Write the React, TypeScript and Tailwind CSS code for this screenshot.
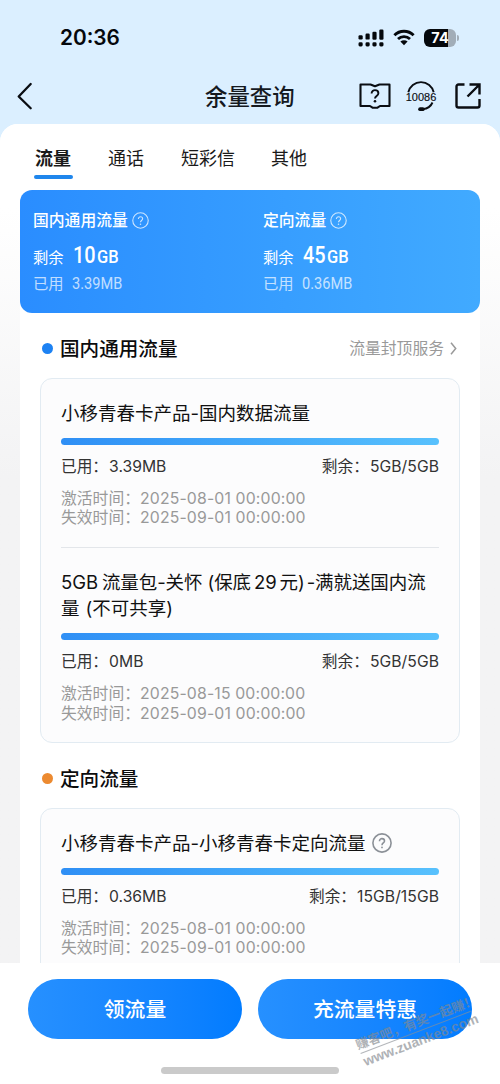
import React from 'react';

const SignalIcon = () => (
  <svg width="26" height="18" viewBox="0 0 26 18" fill="#05080c">
    <rect x="0.5" y="6.2" width="4.2" height="4.3" rx="1.2" />
    <rect x="7.5" y="4.6" width="4.2" height="6" rx="1.2" />
    <rect x="14.4" y="2.7" width="4.2" height="8" rx="1.2" />
    <rect x="21.3" y="0.5" width="4.2" height="10.2" rx="1.2" />
    <rect x="0.5" y="13.3" width="4.2" height="4.2" rx="1.4" />
    <rect x="7.5" y="13.3" width="4.2" height="4.2" rx="1.4" />
    <rect x="14.4" y="13.3" width="4.2" height="4.2" rx="1.4" />
    <rect x="21.3" y="13.3" width="4.2" height="4.2" rx="1.4" />
  </svg>
);

const WifiIcon = () => (
  <svg width="22" height="17" viewBox="0 0 22 17" fill="none" stroke="#05080c">
    <path d="M1.4 6.2a13.7 13.7 0 0 1 19.2 0" strokeWidth="2.9" />
    <path d="M5 10a8.6 8.6 0 0 1 12 0" strokeWidth="2.8" />
    <path d="M11 16.2 7.4 12.6a5.2 5.2 0 0 1 7.2 0Z" fill="#05080c" stroke="none" />
  </svg>
);

const BookIcon = () => (
  <svg width="32" height="28" viewBox="0 0 32 28" fill="none" stroke="#0a0d12" strokeWidth="2.1">
    <path d="M11.5 2.5H1.5V24H11l2.5 1.7h5L21 24h9.5V2.5h-10L16 4.3l-4.5-1.8Z" strokeLinejoin="round" />
    <path d="M12.6 11.4c0-4.5 6.8-4.2 6.8-.2 0 2.7-3.4 2.8-3.4 5.2" strokeWidth="1.9" />
    <circle cx="16" cy="19.3" r="1.3" fill="#0a0d12" stroke="none" />
  </svg>
);

const ServiceIcon = () => (
  <svg width="32" height="32" viewBox="0 0 32 32" fill="none" stroke="#0a0d12" strokeWidth="1.9">
    <path d="M3.3 12.3a13 13 0 0 1 25.4 0" />
    <path d="M27.5 22.5c-1.6 3.6-4.8 6.2-9.5 6.6" />
    <rect x="13.2" y="27.3" width="6.5" height="3.8" rx="1.9" fill="#0a0d12" stroke="none" />
    <text x="16" y="21" textAnchor="middle" fontSize="11" fontFamily="Liberation Sans, sans-serif" fill="#0a0d12" stroke="#0a0d12" strokeWidth="0.15" textLength="30.5" lengthAdjust="spacingAndGlyphs">10086</text>
  </svg>
);

const ShareIcon = () => (
  <svg width="26" height="26" viewBox="0 0 26 26" fill="none" stroke="#0a0d12" strokeWidth="2.4">
    <path d="M9.5 1.5h-6a2 2 0 0 0-2 2v19a2 2 0 0 0 2 2h19a2 2 0 0 0 2-2v-6.5" />
    <path d="M14.5 1.5h10V11.5M24 2 12.5 13.5" />
  </svg>
);

const HelpIcon = ({ size, weight }: { size: number; weight: number }) => (
  <svg width={size} height={size} viewBox="0 0 20 20" fill="none" stroke="currentColor" strokeWidth={weight} className="shrink-0">
    <circle cx="10" cy="10" r="9.1" />
    <path d="M7.5 8.2c0-3.5 5-3.2 5-.2 0 2-2.5 2-2.5 4.2" />
    <circle cx="10" cy="14.4" r="0.9" fill="currentColor" stroke="none" />
  </svg>
);

const Quota = ({ label, amount, used }: { label: string; amount: string; used: string }) => (
  <div className="w-[230px] shrink-0 text-white">
    <div className="flex h-6 items-center gap-[4px]">
      <span className="pt-px text-[15.8px] font-medium leading-6">{label}</span>
      <span className="opacity-75"><HelpIcon size={17} weight={1.3} /></span>
    </div>
    <div className="mt-[7px] flex h-8 items-baseline">
      <span className="w-10 text-[15.3px] leading-8">剩余</span>
      <span className="w-[24px] origin-left scale-x-[0.83] font-['Roboto'] text-[24px] font-medium leading-8">{amount}</span>
      <span className="origin-left scale-x-[0.94] font-['Roboto'] text-[17.5px] font-medium leading-8">GB</span>
    </div>
    <div className="mt-[3px] flex h-5 items-center opacity-70">
      <span className="w-[39px] text-[15.3px]">已用</span>
      <span className="origin-left scale-x-[0.89] font-['Roboto'] text-[16.4px]">{used}</span>
    </div>
  </div>
);

const SectionTitle = ({ color, text, children }: { color: string; text: string; children?: React.ReactNode }) => (
  <div className="flex h-[30px] items-center pl-[22px] pr-[23px]">
    <span className={`size-[11px] rounded-full ${color}`} />
    <span className="ml-[7px] flex-1 pt-[3px] text-[19.6px] font-medium text-[#0c0c0d]">{text}</span>
    {children}
  </div>
);

const Plan = ({ title, used, left, start, className = '' }: { title: React.ReactNode; used: string; left: string; start: string; className?: string }) => (
  <div className={className}>
    <div className="text-[18.5px] leading-[26.5px] text-[#111]">{title}</div>
    <div className="mt-[11px] h-[7px] rounded-full bg-linear-to-r from-[#2f8ff5] to-[#58c1fd]" />
    <div className="mt-[12px] flex h-5 items-center justify-between text-[15.7px] text-[#333]">
      <span>已用：<span className="ml-px">{used}</span></span>
      <span>剩余：<span className="ml-px tracking-[0.06px]">{left}</span></span>
    </div>
    <div className="mt-[12px] text-[15.8px] leading-[19.7px] text-[#999]">
      <div className="whitespace-nowrap">激活时间：<span className="tracking-[0.15px]">{start} 00:00:00</span></div>
      <div className="whitespace-nowrap">失效时间：<span className="tracking-[0.15px]">2025-09-01 00:00:00</span></div>
    </div>
  </div>
);

export default function App() {
  return (
    <div className="relative flex h-[1084px] w-[500px] flex-col overflow-hidden bg-[#dbefff] font-['Inter','Noto_Sans_CJK_SC',sans-serif]">
      <div className="flex h-[66px] shrink-0 items-center pl-[60px] pr-[43px] pt-[9px]">
        <span className="flex-1 text-[20.8px] font-semibold text-[#05080c]">20:36</span>
        <SignalIcon />
        <span className="ml-[9px]"><WifiIcon /></span>
        <span className="ml-[9px] flex h-[18px] w-[32px] items-center justify-center rounded-[6px] bg-linear-to-r from-[#05080c] from-74% to-[#a1adb8] to-74% text-[14.5px] font-bold text-white">74</span>
        <span className="ml-px -mr-[2px] h-[6px] w-[2px] rounded-r-full bg-[#a1adb8]" />
      </div>
      <div className="flex h-[58px] shrink-0 items-center pl-[17px] pr-[19px] pt-px">
        <svg width="16" height="28" viewBox="0 0 16 28" fill="none" stroke="#0a0d12" strokeWidth="2.3" strokeLinecap="round" strokeLinejoin="round">
          <path d="M13.7 2 1.7 14.5l12 11.8" />
        </svg>
        <span className="ml-[172px] flex-1 pt-[2px] text-[22.4px] font-medium text-[#15191f]">余量查询</span>
        <BookIcon />
        <span className="ml-[14px]"><ServiceIcon /></span>
        <span className="ml-[18px]"><ShareIcon /></span>
      </div>

      <div className="min-h-0 flex-1 overflow-hidden rounded-t-[18px] bg-linear-to-b from-white from-10% to-[#f3f3f4] to-42%">
        <div className="flex h-[66px] bg-white pl-[35px] pt-[21px] text-[18px] text-[#1a1a1a]">
          <div className="w-[73px]">
            <div className="h-7 font-bold leading-7">流量</div>
            <div className="-ml-px mt-[2px] h-[4px] w-[39px] rounded-full bg-[#1f86ec]" />
          </div>
          <div className="w-[73px] leading-7">通话</div>
          <div className="w-[90px] leading-7">短彩信</div>
          <div className="leading-7">其他</div>
        </div>
        <div className="mx-5 bg-white">
          <div className="flex h-[123px] rounded-xl bg-linear-to-r from-[#2a8dff] to-[#41aaff] pl-[13px] pt-[18px]">
            <Quota label="国内通用流量" amount="10" used="3.39MB" />
            <Quota label="定向流量" amount="45" used="0.36MB" />
          </div>
          <div className="h-5" />
          <SectionTitle color="bg-[#1d82f3]" text="国内通用流量">
            <span className="flex items-center gap-[6px] text-[15.8px] text-[#999]">
              <span className="pt-[2px]">流量封顶服务</span>
              <svg width="7" height="13" viewBox="0 0 7 13" fill="none" stroke="#999" strokeWidth="1.5"><path d="M1 .8 5.7 6.5 1 12.2" /></svg>
            </span>
          </SectionTitle>
          <div className="mx-5 mt-[15px] h-[365px] rounded-[12px] border border-[#e2ebf2] bg-[#fcfcfd] px-5 pt-[21px]">
            <Plan title="小移青春卡产品-国内数据流量" used="3.39MB" left="5GB/5GB" start="2025-08-01" />
            <div className="mt-[19px] border-t border-[#e3e6ea]" />
            <Plan
              className="mt-[21px]"
              title={<><div className="whitespace-nowrap tracking-[-0.08px]">5GB<span className="ml-[4px]">流量包-关怀</span><span className="ml-[5px]">(</span>保底<span className="ml-[3px]">29</span><span className="ml-[3px]">元</span>)<span className="ml-[2px]">-满就送国内流</span></div><div>量<span className="ml-[6px]">(</span>不可共享)</div></>}
              used="0MB"
              left="5GB/5GB"
              start="2025-08-15"
            />
          </div>
          <div className="h-5" />
          <SectionTitle color="bg-[#ec8a30]" text="定向流量" />
          <div className="mx-5 mt-[15px] h-[365px] rounded-[12px] border border-[#e2ebf2] bg-[#fcfcfd] px-5 pt-[21px]">
            <Plan
              title={<span className="flex items-center text-[#111]">小移青春卡产品-小移青春卡定向流量<span className="ml-[6px] text-[#8b9097]"><HelpIcon size={20} weight={1.6} /></span></span>}
              used="0.36MB"
              left="15GB/15GB"
              start="2025-08-01"
            />
          </div>
        </div>
      </div>

      <div className="flex h-[121px] shrink-0 flex-col items-center bg-white pt-4">
        <div className="flex w-full gap-4 px-7 text-[20.8px] font-medium text-white">
          <div className="flex h-[60px] flex-1 items-center justify-center rounded-full bg-linear-to-r from-[#2690ff] to-[#027cff] pt-[2px]">领流量</div>
          <div className="flex h-[60px] flex-1 items-center justify-center rounded-full bg-linear-to-r from-[#2690ff] to-[#027cff] pt-[2px]">充流量特惠</div>
        </div>
        <div className="mt-7 h-[7px] w-[178px] rounded-full bg-[#cacaca]" />
      </div>

      <div className="absolute left-[361px] top-[1037px] w-[126px] origin-left -rotate-[21deg] text-[#858a90] opacity-65">
        <div className="-ml-px whitespace-nowrap text-[12.8px] font-bold leading-[16px]">赚客吧，有奖一起赚！</div>
        <div className="h-px w-[118px] bg-[#8c9096]" />
        <div className="whitespace-nowrap font-['Liberation_Sans'] text-[13.8px] font-bold leading-[18px]">www.zuanke8.com</div>
      </div>
    </div>
  );
}
